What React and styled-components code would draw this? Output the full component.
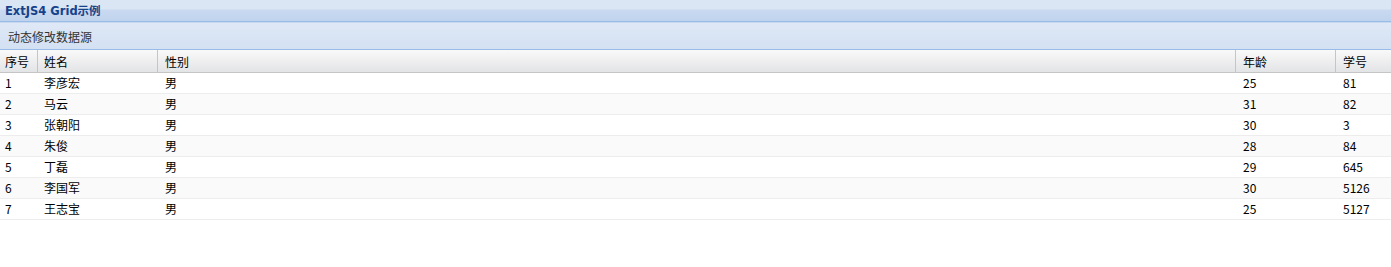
import React from "react";
import styled, { createGlobalStyle } from "styled-components";

const Global = createGlobalStyle`
  html, body { margin: 0; padding: 0; background: #fff; }
  body { font-family: "Noto Sans CJK SC", "DejaVu Sans", sans-serif; }
`;

const Panel = styled.div`
  width: 1391px;
  display: flex;
  flex-direction: column;
`;

const TitleBar = styled.div`
  height: 22px;
  box-sizing: border-box;
  border-bottom: 1px solid #99bbe8;
  background: linear-gradient(to bottom, #dae6f4 0px, #dae6f4 9px, #c9d9f0 10px, #c0d3ee 21px);
  display: flex;
  align-items: center;
  padding-left: 5px;
  padding-bottom: 2px;
  color: #15428b;
  font-family: "DejaVu Sans", "Noto Sans CJK SC", sans-serif;
  font-weight: bold;
  font-size: 11.5px;
`;

const Toolbar = styled.div`
  height: 28px;
  box-sizing: border-box;
  border-top: 1px solid #c8d8ef;
  border-bottom: 1px solid #99bbe8;
  background: linear-gradient(to bottom, #dfe8f6, #d3e1f3);
  display: flex;
  align-items: center;
  padding-left: 8px;
  font-size: 12px;
  color: #333;
`;

const widths = [38, 120, 1078, 100, 55];
const pads = [5, 6, 7, 7, 7];

const HeaderRow = styled.div`
  display: flex;
  height: 23px;
  box-sizing: border-box;
  border-bottom: 1px solid #c5c5c5;
  background: linear-gradient(to bottom, #f9f9f9, #e3e4e6);
`;

const HeaderCell = styled.div`
  width: ${(p) => p.$w}px;
  padding-left: ${(p) => p.$pad}px;
  box-sizing: border-box;
  border-right: ${(p) => (p.$last ? "none" : "1px solid #c5c5c5")};
  display: flex;
  align-items: center;
  font-size: 12px;
  color: #000;
  flex-shrink: 0;
`;

const Row = styled.div`
  display: flex;
  height: 21px;
  box-sizing: border-box;
  border-bottom: 1px solid #ededed;
  background: ${(p) => (p.$alt ? "#fafafa" : "#fff")};
`;

const Cell = styled.div`
  width: ${(p) => p.$w}px;
  padding-left: ${(p) => p.$pad}px;
  padding-bottom: 2px;
  box-sizing: border-box;
  display: flex;
  align-items: center;
  font-size: 12px;
  color: #000;
  flex-shrink: 0;
`;

const headers = ["序号", "姓名", "性别", "年龄", "学号"];
const rows = [
  ["1", "李彦宏", "男", "25", "81"],
  ["2", "马云", "男", "31", "82"],
  ["3", "张朝阳", "男", "30", "3"],
  ["4", "朱俊", "男", "28", "84"],
  ["5", "丁磊", "男", "29", "645"],
  ["6", "李国军", "男", "30", "5126"],
  ["7", "王志宝", "男", "25", "5127"],
];

export default function App() {
  return (
    <Panel>
      <Global />
      <TitleBar>ExtJS4 Grid示例</TitleBar>
      <Toolbar>动态修改数据源</Toolbar>
      <HeaderRow>
        {headers.map((h, i) => (
          <HeaderCell key={h} $w={widths[i]} $pad={pads[i]} $last={i === headers.length - 1}>
            {h}
          </HeaderCell>
        ))}
      </HeaderRow>
      {rows.map((r, ri) => (
        <Row key={ri} $alt={ri % 2 === 1}>
          {r.map((c, i) => (
            <Cell key={i} $w={widths[i]} $pad={pads[i]}>
              {c}
            </Cell>
          ))}
        </Row>
      ))}
    </Panel>
  );
}
